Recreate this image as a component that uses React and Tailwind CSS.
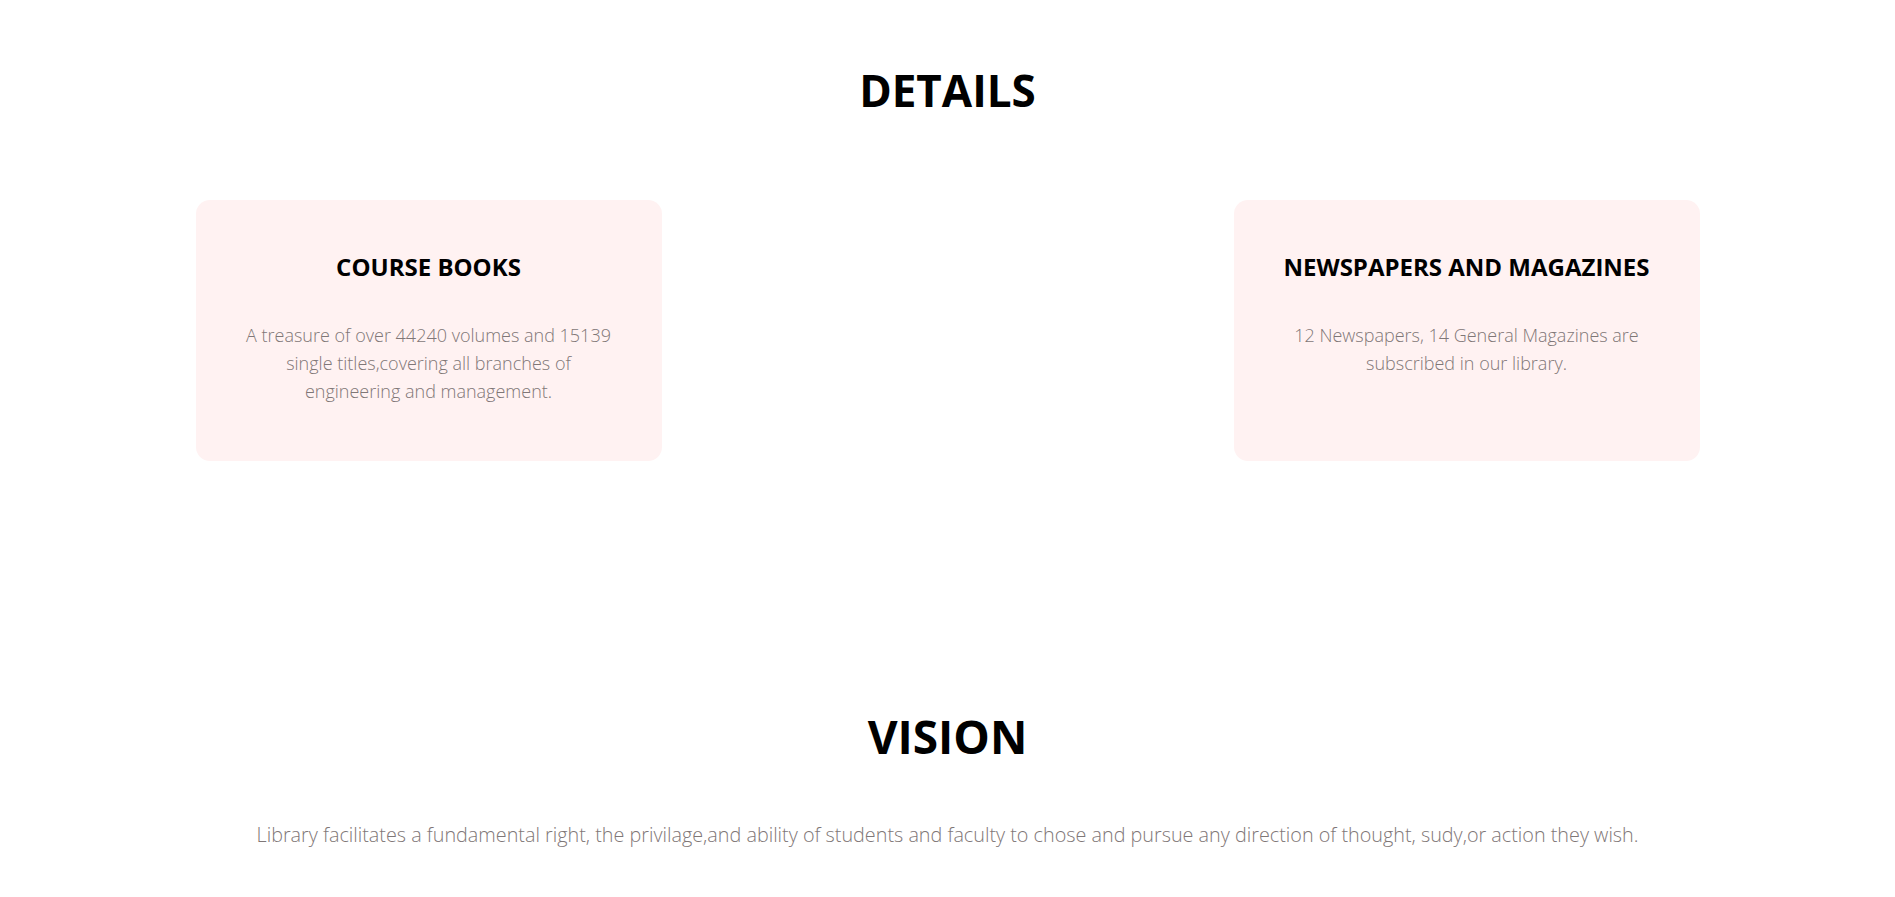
import React from 'react';

const cards = [
  {
    title: 'COURSE BOOKS',
    lines: ['A treasure of over 44240 volumes and 15139', 'single titles,covering all branches of', 'engineering and management.'],
  },
  null,
  {
    title: 'NEWSPAPERS AND MAGAZINES',
    lines: ['12 Newspapers, 14 General Magazines are', 'subscribed in our library.'],
  },
];

const Card = ({ card }) => {
  if (!card) return <div className="h-[261px]"></div>;
  return (
    <div className="h-[261px] rounded-[14px] bg-[#fff2f2] pt-[51px] px-6 text-center">
      <h3 className="text-[24px] leading-[32px] font-bold text-black">{card.title}</h3>
      <p className="mt-[38px] text-[18px] leading-[28px] font-light text-[#7f7777]">
        {card.lines.map((l, i) => (
          <span key={i} className="block">{l}</span>
        ))}
      </p>
    </div>
  );
};

export default function App() {
  return (
    <div className="min-h-[897px] bg-white font-['Open_Sans',sans-serif]">
      <section className="pt-[68px]">
        <h2 className="text-center text-[44px] leading-[44px] font-bold text-black">DETAILS</h2>
        <div className="mx-auto mt-[88px] grid w-[1504px] grid-cols-3 gap-[53px]">
          {cards.map((c, i) => (
            <Card key={i} card={c} />
          ))}
        </div>
      </section>

      <section className="mt-[252px] pb-10">
        <h2 className="text-center text-[46px] leading-[46px] font-bold text-black">VISION</h2>
        <p className="mt-[62px] text-center text-[19.8px] leading-[28px] font-light text-[#7f7777]">
          Library facilitates a fundamental right, the privilage,and ability of students and faculty to chose and pursue any direction of thought, sudy,or action they wish.
        </p>
      </section>
    </div>
  );
}
